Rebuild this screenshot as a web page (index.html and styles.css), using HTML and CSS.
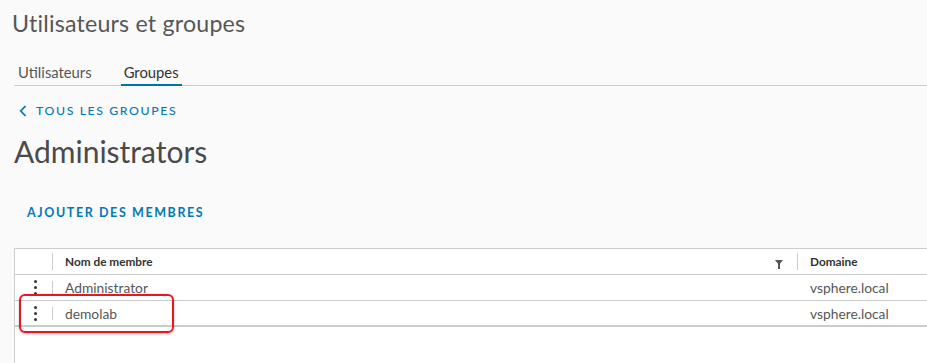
FILE: index.html
```html
<!DOCTYPE html>
<html lang="fr">
<head>
<meta charset="utf-8">
<link rel="stylesheet" href="styles.css">
</head>
<body>
<div class="page">
  <h1 class="title">Utilisateurs et groupes</h1>
  <nav class="tabs">
    <span class="tab">Utilisateurs</span>
    <span class="tab active">Groupes</span>
  </nav>
  <a class="back">
    <svg width="8" height="12" viewBox="0 0 8 12"><path d="M6.5 1 L1.8 6 L6.5 11" fill="none" stroke="#0079b8" stroke-width="1.8"/></svg>
    <span>TOUS LES GROUPES</span>
  </a>
  <h2 class="group-name">Administrators</h2>
  <div class="actions"><span class="btn-link">AJOUTER DES MEMBRES</span></div>
  <div class="grid">
    <div class="row head">
      <div class="cell c-act"></div>
      <div class="cell c-name"><span>Nom de membre</span>
        <svg class="filter" width="8" height="9" viewBox="0 0 8 9"><path d="M0 0 H8 L5 3.8 V9 H3 V3.8 Z" fill="#565656"/></svg>
      </div>
      <div class="cell c-dom"><span>Domaine</span></div>
    </div>
    <div class="row">
      <div class="cell c-act"><span class="dots"><i></i><i></i><i></i></span></div>
      <div class="cell c-name"><span>Administrator</span></div>
      <div class="cell c-dom"><span>vsphere.local</span></div>
    </div>
    <div class="row last">
      <div class="cell c-act"><span class="dots"><i></i><i></i><i></i></span></div>
      <div class="cell c-name"><span>demolab</span></div>
      <div class="cell c-dom"><span>vsphere.local</span></div>
      <div class="highlight"></div>
    </div>
  </div>
</div>
</body>
</html>
```

FILE: styles.css
```css
* { box-sizing: border-box; }
html, body { margin: 0; padding: 0; }
body {
  background: #fafafa;
  font-family: Lato, "Open Sans", sans-serif;
  color: #565656;
  width: 927px;
  height: 363px;
  overflow: hidden;
}
.page { padding: 0 0 0 12px; }
.title {
  margin: 0;
  padding-top: 9px;
  font-weight: 400;
  font-size: 23.2px;
  line-height: 28px;
  color: #565656;
  letter-spacing: 0.2px;
}
.tabs {
  margin-top: 24px;
  margin-left: 2px;
  display: flex;
  border-bottom: 1px solid #cccccc;
  height: 25px;
}
.tab {
  font-size: 14.8px;
  line-height: 22px;
  color: #565656;
  padding: 0 4px;
  margin-right: 25px;
  height: 25px;
}
.tab.active {
  color: #333;
  border-bottom: 2px solid #0072a3;
  padding: 0 3px;
}
.back {
  display: flex;
  align-items: center;
  gap: 9px;
  margin-top: 17px;
  margin-left: 7px;
  color: #0079b8;
  font-size: 12.3px;
  letter-spacing: 1.6px;
  line-height: 16px;
  font-weight: 500;
}
.group-name {
  margin: 0;
  margin-top: 14px;
  margin-left: 2px;
  font-weight: 400;
  font-size: 30px;
  line-height: 36px;
  color: #4a4a4a;
}
.actions {
  margin-top: 32px;
  margin-left: 15px;
  height: 18px;
}
.btn-link {
  color: #0079b8;
  font-size: 12.5px;
  letter-spacing: 1.6px;
  font-weight: 700;
  line-height: 18px;
}
.grid {
  margin-top: 29px;
  margin-left: 2px;
  background: #fff;
  border: 1px solid #cccccc;
  border-right: none;
  height: 120px;
}
.row {
  display: flex;
  height: 26px;
  border-bottom: 1px solid #cccccc;
  position: relative;
}
.row.head { background: #fff; }
.row.last { border-bottom: 2px solid #cccccc; }
.cell {
  display: flex;
  align-items: center;
  font-size: 13.8px;
  color: #565656;
}
.c-act { width: 38px; justify-content: center; position: relative; }
.c-act::after {
  content: "";
  position: absolute;
  right: 0;
  top: 6px;
  width: 1px;
  height: 13px;
  background: #cccccc;
}
.head .c-act::after { top: 4px; height: 17px; }
.c-name { width: 745px; padding-left: 12px; position: relative; }
.head .cell { font-size: 11.8px; font-weight: 700; color: #333; }
.head .c-name::after {
  content: "";
  position: absolute;
  right: 0;
  top: 4px;
  width: 1px;
  height: 17px;
  background: #cccccc;
}
.filter { position: absolute; right: 15px; top: 11px; }
.c-dom { padding-left: 12px; }
.dots { display: flex; flex-direction: column; gap: 3px; margin-left: 3px; }
.dots i { width: 3px; height: 3px; border-radius: 50%; background: #333; display: block; }
.highlight {
  position: absolute;
  left: 4px;
  top: -7px;
  width: 155px;
  height: 39px;
  border: 2px solid #e8161d;
  border-radius: 6px;
  box-shadow: 0 1px 3px rgba(0,0,0,0.25);
}
```
